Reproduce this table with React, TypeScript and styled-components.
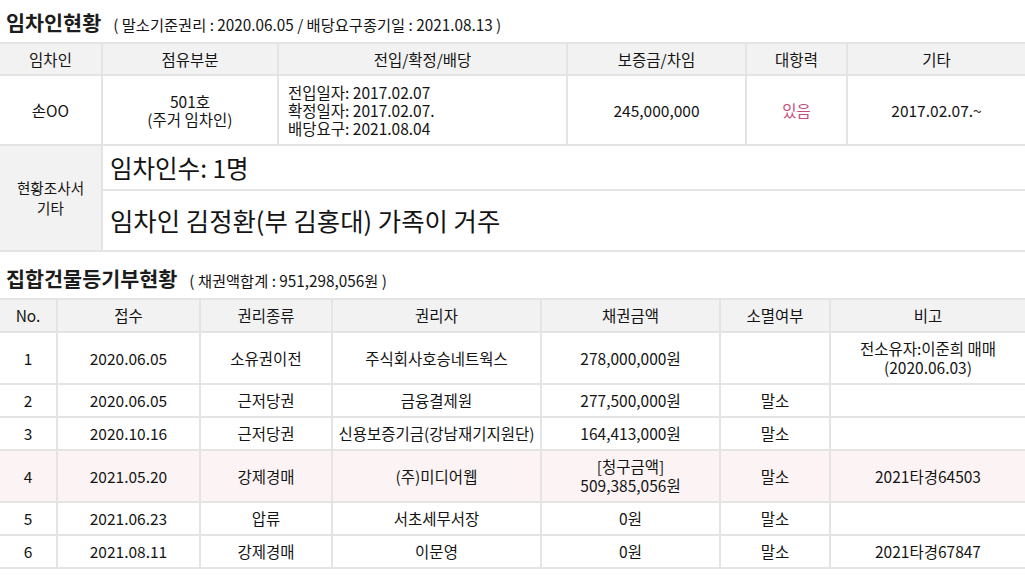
import React from 'react';
import styled, { createGlobalStyle } from 'styled-components';

const Global = createGlobalStyle`
  html, body { margin: 0; padding: 0; background: #fff; }
  body {
    font-family: "Noto Sans CJK KR", "Noto Sans", sans-serif;
    color: #141414;
  }
`;

const Page = styled.div`
  width: 1025px;
  height: 588px;
  overflow: hidden;
`;

const TitleBar = styled.div<{ $h: number }>`
  height: ${p => p.$h}px;
  box-sizing: border-box;
  display: flex;
  align-items: flex-end;
  padding: 0 0 4px 6px;
`;

const TitleRow = styled.div`
  display: flex;
  align-items: baseline;
  gap: 12px;
`;

const Title = styled.h2`
  margin: 0;
  font-size: 20.7px;
  font-weight: 700;
  line-height: 28px;
  color: #1c1c1c;
`;

const Sub = styled.span`
  font-size: 15.3px;
  line-height: 28px;
  color: #141414;
`;

const Table = styled.table<{ $lh: number }>`
  width: 1025px;
  border-collapse: collapse;
  table-layout: fixed;
  border-top: 2px solid #555;
  border-left: hidden;
  border-right: hidden;
  border-bottom: 2px solid #e4e4e4;
  font-size: 15.5px;
  line-height: ${p => p.$lh}px;
`;

const Row = styled.tr<{ $bg?: string }>`
  background: ${p => p.$bg || 'transparent'};
`;

const Th = styled.th<{ $small?: boolean }>`
  background: #f2f2f2;
  font-weight: 400;
  font-size: ${p => (p.$small ? '14.6px' : '15.5px')};
  line-height: ${p => (p.$small ? '20px' : 'inherit')};
  color: #141414;
  padding: 6px 4px;
  border: 2px solid #e4e4e4;
  text-align: center;
  vertical-align: middle;
  white-space: nowrap;
`;

const Td = styled.td<{ $align?: 'left' | 'center'; $color?: string }>`
  padding: ${p => (p.$align === 'left' ? '7px 8px 7px 9px' : '6px 4px')};
  border: 2px solid #e4e4e4;
  text-align: ${p => p.$align || 'center'};
  vertical-align: middle;
  color: ${p => p.$color || '#141414'};
  white-space: nowrap;
`;

const NoteCell = styled.td<{ $size: number; $h: number }>`
  height: ${p => p.$h}px;
  box-sizing: border-box;
  padding: 0 8px 0 7px;
  border: 2px solid #e4e4e4;
  text-align: left;
  vertical-align: middle;
  color: #141414;
  font-size: ${p => p.$size}px;
  line-height: ${p => Math.round(p.$size * 1.15)}px;
  white-space: nowrap;
`;

const tenantCols = [102, 176, 289, 179, 101, 178];
const regCols = [57, 143, 132, 209, 179, 110, 195];

type Reg = { no: string; date: string; kind: string; holder: string; amount: React.ReactNode; gone: string; note: React.ReactNode; pink?: boolean };

const regs: Reg[] = [
  { no: '1', date: '2020.06.05', kind: '소유권이전', holder: '주식회사호승네트웍스', amount: '278,000,000원', gone: '', note: <>전소유자:이준희 매매<br />(2020.06.03)</> },
  { no: '2', date: '2020.06.05', kind: '근저당권', holder: '금융결제원', amount: '277,500,000원', gone: '말소', note: '' },
  { no: '3', date: '2020.10.16', kind: '근저당권', holder: '신용보증기금(강남재기지원단)', amount: '164,413,000원', gone: '말소', note: '' },
  { no: '4', date: '2021.05.20', kind: '강제경매', holder: '(주)미디어웹', amount: <>[청구금액]<br />509,385,056원</>, gone: '말소', note: '2021타경64503', pink: true },
  { no: '5', date: '2021.06.23', kind: '압류', holder: '서초세무서장', amount: '0원', gone: '말소', note: '' },
  { no: '6', date: '2021.08.11', kind: '강제경매', holder: '이문영', amount: '0원', gone: '말소', note: '2021타경67847' },
];

export default function App() {
  return (
    <Page>
      <Global />
      <TitleBar $h={42}>
        <TitleRow>
          <Title>임차인현황</Title>
          <Sub>( 말소기준권리 : 2020.06.05 / 배당요구종기일 : 2021.08.13 )</Sub>
        </TitleRow>
      </TitleBar>
      <Table $lh={18}>
        <colgroup>
          {tenantCols.map((w, i) => <col key={i} style={{ width: w }} />)}
        </colgroup>
        <thead>
          <Row>
            <Th>임차인</Th>
            <Th>점유부분</Th>
            <Th>전입/확정/배당</Th>
            <Th>보증금/차임</Th>
            <Th>대항력</Th>
            <Th>기타</Th>
          </Row>
        </thead>
        <tbody>
          <Row>
            <Td>손OO</Td>
            <Td>501호<br />(주거 임차인)</Td>
            <Td $align="left">전입일자: 2017.02.07<br />확정일자: 2017.02.07.<br />배당요구: 2021.08.04</Td>
            <Td>245,000,000</Td>
            <Td $color="#c4507a">있음</Td>
            <Td>2017.02.07.~</Td>
          </Row>
          <Row>
            <Th as="td" rowSpan={2} $small>현황조사서<br />기타</Th>
            <NoteCell colSpan={5} $size={24.5} $h={45}>임차인수: 1명</NoteCell>
          </Row>
          <Row>
            <NoteCell colSpan={5} $size={25.4} $h={61}>임차인 김정환(부 김홍대) 가족이 거주</NoteCell>
          </Row>
        </tbody>
      </Table>

      <TitleBar $h={46}>
        <TitleRow>
          <Title>집합건물등기부현황</Title>
          <Sub>( 채권액합계 : 951,298,056원 )</Sub>
        </TitleRow>
      </TitleBar>
      <Table $lh={19}>
        <colgroup>
          {regCols.map((w, i) => <col key={i} style={{ width: w }} />)}
        </colgroup>
        <thead>
          <Row>
            <Th>No.</Th>
            <Th>접수</Th>
            <Th>권리종류</Th>
            <Th>권리자</Th>
            <Th>채권금액</Th>
            <Th>소멸여부</Th>
            <Th>비고</Th>
          </Row>
        </thead>
        <tbody>
          {regs.map(r => (
            <Row key={r.no} $bg={r.pink ? '#fcf4f4' : undefined}>
              <Td>{r.no}</Td>
              <Td>{r.date}</Td>
              <Td>{r.kind}</Td>
              <Td>{r.holder}</Td>
              <Td>{r.amount}</Td>
              <Td>{r.gone}</Td>
              <Td>{r.note}</Td>
            </Row>
          ))}
        </tbody>
      </Table>

      <TitleBar $h={46}>
        <TitleRow>
          <Title>토지현황</Title>
        </TitleRow>
      </TitleBar>
    </Page>
  );
}
